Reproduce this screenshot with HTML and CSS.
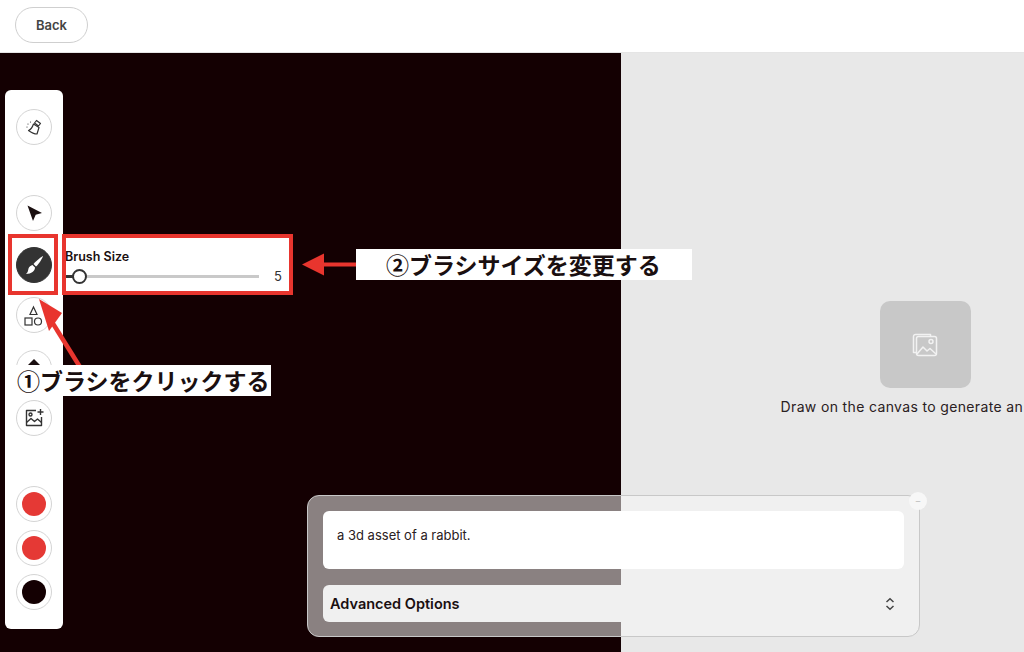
FILE: index.html
```html
<!DOCTYPE html>
<html lang="ja">
<head>
    <meta charset="UTF-8">
    <meta name="viewport" content="width=device-width, initial-scale=1.0">
    <title>Brush Size</title>
    <link rel="stylesheet" href="styles.css">
</head>
<body>
    <header class="top-bar">
        <button class="back-btn">Back</button>
    </header>

    <main class="workspace">
        <section class="canvas-pane">
            <div class="toolbar">
                <div class="tool-btn">
                    <svg width="24" height="24" viewBox="0 0 24 24" fill="none" stroke="#333" stroke-width="1.2" stroke-linejoin="round" stroke-linecap="round">
                        <path d="M14.5 5.5l4 3-2 2.5-4-3z"/>
                        <path d="M11.5 9l5.500 3.500-2 6.500c-3 0-6.500-2-8.500-3.500 2.500-1 4-3.500 5-6.500z"/>
                        <path d="M6 9h.01M8.5 7h.01M5 12h.01"/>
                    </svg>
                </div>
                <div class="tool-btn tool-select">
                    <svg width="24" height="24" viewBox="0 0 24 24">
                        <path d="M5.500 4.500L20 12l-6.300 1.700L11 20z" fill="#1a0f10"/>
                    </svg>
                </div>
                <div class="tool-btn tool-brush">
                    <svg width="24" height="24" viewBox="0 0 24 24" fill="#fff">
                        <path d="M21 3c-1 .2-7 5-9.500 8l2.500 2.500c3-2.500 6.800-9 7-10.500z"/>
                        <path d="M10.500 12l2.500 2.500c0 3.500-3.500 6.500-9 6.500 2-1.500 2-3.500 2.500-5.500.5-2 2.500-3 4-3.500z"/>
                    </svg>
                </div>
                <div class="tool-btn tool-shapes">
                    <svg width="26" height="26" viewBox="0 0 26 26" fill="none" stroke="#333" stroke-width="1.2">
                        <path d="M12.500 5l3.500 7.500H9z"/>
                        <rect x="4" y="16" width="7" height="7"/>
                        <circle cx="17" cy="19.500" r="3.500"/>
                    </svg>
                </div>
                <div class="tool-btn tool-fill">
                    <svg width="24" height="24" viewBox="0 0 24 24">
                        <path d="M12 3l7 7H5z" fill="#1a0f10"/>
                    </svg>
                </div>
                <div class="tool-btn tool-image">
                    <svg width="24" height="24" viewBox="0 0 24 24" fill="none" stroke="#333" stroke-width="1.4" stroke-linejoin="round">
                        <path d="M14 4.500H4.500v15h15V11"/>
                        <circle cx="8.500" cy="8.500" r="1.500"/>
                        <path d="M4.500 16.500l4.500-4 3.500 3 3-2.500 4 3.500"/>
                        <path d="M18.500 3v6M15.500 6h6"/>
                    </svg>
                </div>
                <div class="tool-btn tool-color first-color"><span class="swatch swatch-red"></span></div>
                <div class="tool-btn tool-color"><span class="swatch swatch-red"></span></div>
                <div class="tool-btn tool-color"><span class="swatch swatch-dark"></span></div>
            </div>

            <div class="brush-panel">
                <div class="brush-label">Brush Size</div>
                <div class="brush-row">
                    <div class="slider">
                        <span class="slider-fill"></span>
                        <span class="slider-knob"></span>
                    </div>
                    <span class="brush-value">5</span>
                </div>
            </div>
        </section>

        <section class="result-pane">
            <div class="empty-state">
                <div class="empty-thumb">
                    <svg width="28" height="28" viewBox="0 0 28 28" fill="none" stroke="#f2f2f2" stroke-width="1.5" stroke-linejoin="round">
                        <path d="M5 21.500H2.500V5.500a2 2 0 0 1 2-2h15v2"/>
                        <rect x="5.500" y="5.500" width="20" height="19" rx="2"/>
                        <circle cx="20" cy="10.500" r="2"/>
                        <path d="M6 23l6-7 4 4 3-2.500 6 5.500"/>
                    </svg>
                </div>
                <p class="empty-text">Draw on the canvas to generate an image</p>
            </div>
        </section>

        <div class="prompt-card">
            <span class="collapse-dot">–</span>
            <div class="prompt-input">a 3d asset of a rabbit.</div>
            <div class="advanced-row">
                <span>Advanced Options</span>
                <svg width="12" height="14" viewBox="0 0 12 14" fill="none" stroke="#444" stroke-width="1.5">
                    <path d="M2.500 5L6 1.800 9.500 5M2.500 9L6 12.200 9.500 9"/>
                </svg>
            </div>
        </div>
    </main>

    <!-- annotations on top of the screenshot -->
    <div class="mark mark-brush"></div>
    <div class="mark mark-panel"></div>
    <svg class="arrows" width="1024" height="652" viewBox="0 0 1024 652">
        <path d="M356 264.500H320" stroke="#e8352e" stroke-width="4"/>
        <path d="M302 264.500l22-11v22z" fill="#e8352e"/>
        <path d="M80 367L52 322" stroke="#e8352e" stroke-width="4.500"/>
        <path d="M39 299l23 14-13 18z" fill="#e8352e"/>
    </svg>
    <div class="note note-one">①ブラシをクリックする</div>
    <div class="note note-two">②ブラシサイズを変更する</div>
</body>
</html>
```

FILE: styles.css
```css
* {
    box-sizing: border-box;
}

html, body {
    margin: 0;
    height: 100%;
    overflow: hidden;
}

body {
    position: relative;
    font-family: Inter, "Noto Sans CJK JP", sans-serif;
    color: #1a0f10;
    background: #fff;
}

.top-bar {
    height: 53px;
    padding: 7px 15px;
    background: #fff;
    border-bottom: 1px solid #e5e5e5;
}

.back-btn {
    width: 73px;
    height: 36px;
    background: #fff;
    border: 1px solid #cfcfcf;
    border-radius: 18px;
    font-family: Inter, sans-serif;
    font-size: 13px;
    font-weight: 600;
    color: #444;
}

.workspace {
    position: relative;
    display: flex;
    height: 599px;
}

.canvas-pane {
    display: flex;
    align-items: flex-start;
    width: 621px;
    padding: 37px 0 0 5px;
    background: #140002;
}

.toolbar {
    display: flex;
    flex-direction: column;
    align-items: center;
    width: 58px;
    height: 539px;
    padding-top: 19px;
    background: #fff;
    border-radius: 6px;
}

.tool-btn {
    display: flex;
    align-items: center;
    justify-content: center;
    width: 36px;
    height: 36px;
    flex: none;
    background: #fff;
    border: 1px solid #d4d4d4;
    border-radius: 50%;
}

.tool-select {
    margin-top: 50px;
}

.tool-brush {
    margin-top: 16px;
    background: #333;
    border-color: #333;
}

.tool-shapes {
    margin-top: 14px;
}

.tool-fill {
    margin-top: 17px;
}

.tool-image {
    margin-top: 14px;
}

.tool-color {
    margin-top: 8px;
}

.first-color {
    margin-top: 50px;
}

.swatch {
    width: 24px;
    height: 24px;
    border-radius: 50%;
}

.swatch-red {
    background: #e53935;
}

.swatch-dark {
    background: #140002;
}

.brush-panel {
    width: 228px;
    height: 56px;
    margin-top: 147px;
    padding: 12px 9px 0 2px;
    background: #fff;
}

.brush-label {
    font-size: 12.5px;
    font-weight: 600;
    line-height: 16px;
}

.brush-row {
    display: flex;
    align-items: center;
    justify-content: space-between;
    margin-top: 3px;
    padding-left: 1px;
}

.slider {
    position: relative;
    width: 193px;
    height: 3px;
    background: #c9c9c9;
}

.slider-fill {
    position: absolute;
    left: 0;
    top: 0;
    width: 10px;
    height: 3px;
    background: #333;
}

.slider-knob {
    position: absolute;
    left: 6px;
    top: -6px;
    width: 15px;
    height: 15px;
    background: #fff;
    border: 2px solid #333;
    border-radius: 50%;
}

.brush-value {
    font-size: 13px;
    color: #333;
}

.result-pane {
    flex: 1;
    min-width: 0;
    overflow: hidden;
    background: #e8e8e8;
}

.empty-state {
    display: flex;
    flex-direction: column;
    align-items: center;
    width: 608px;
    padding-top: 248px;
    white-space: nowrap;
}

.empty-thumb {
    display: flex;
    align-items: center;
    justify-content: center;
    width: 91px;
    height: 87px;
    background: #c8c8c8;
    border-radius: 10px;
}

.empty-text {
    margin: 10px 0 0;
    font-size: 14px;
    letter-spacing: 0.35px;
    line-height: 17px;
    color: #2a2022;
}

.prompt-card {
    position: absolute;
    left: 307px;
    top: 442px;
    width: 613px;
    height: 142px;
    padding: 15px;
    background: rgba(248, 248, 248, 0.52);
    border: 1px solid #c8c8c8;
    border-radius: 12px;
}

.collapse-dot {
    position: absolute;
    right: -8px;
    top: -4px;
    width: 18px;
    height: 18px;
    background: #f7f7f7;
    border-radius: 50%;
    font-size: 9px;
    line-height: 18px;
    text-align: center;
    color: #bbb;
}

.prompt-input {
    height: 58px;
    padding: 14px;
    background: #fff;
    border-radius: 6px;
    font-size: 13px;
    line-height: 20px;
    color: #2a2022;
}

.advanced-row {
    display: flex;
    align-items: center;
    justify-content: space-between;
    height: 37px;
    margin-top: 16px;
    padding: 0 8px 0 7px;
    background: #f0f0f0;
    border-radius: 6px;
    font-size: 14.5px;
    font-weight: 600;
}

.mark {
    position: absolute;
    border: 4px solid #e8352e;
}

.mark-brush {
    left: 8px;
    top: 234px;
    width: 50px;
    height: 61px;
}

.mark-panel {
    left: 62px;
    top: 234px;
    width: 231px;
    height: 61px;
}

.arrows {
    position: absolute;
    left: 0;
    top: 0;
}

.note {
    position: absolute;
    background: #fff;
    font-family: "Noto Sans CJK JP", sans-serif;
    font-weight: 700;
    font-size: 23px;
    line-height: 31px;
    color: #1a0f10;
    white-space: nowrap;
}

.note-one {
    left: 15px;
    top: 365px;
    padding-left: 2px;
    width: 256px;
}

.note-two {
    left: 356px;
    top: 249px;
    width: 336px;
    padding-left: 30px;
}
```
